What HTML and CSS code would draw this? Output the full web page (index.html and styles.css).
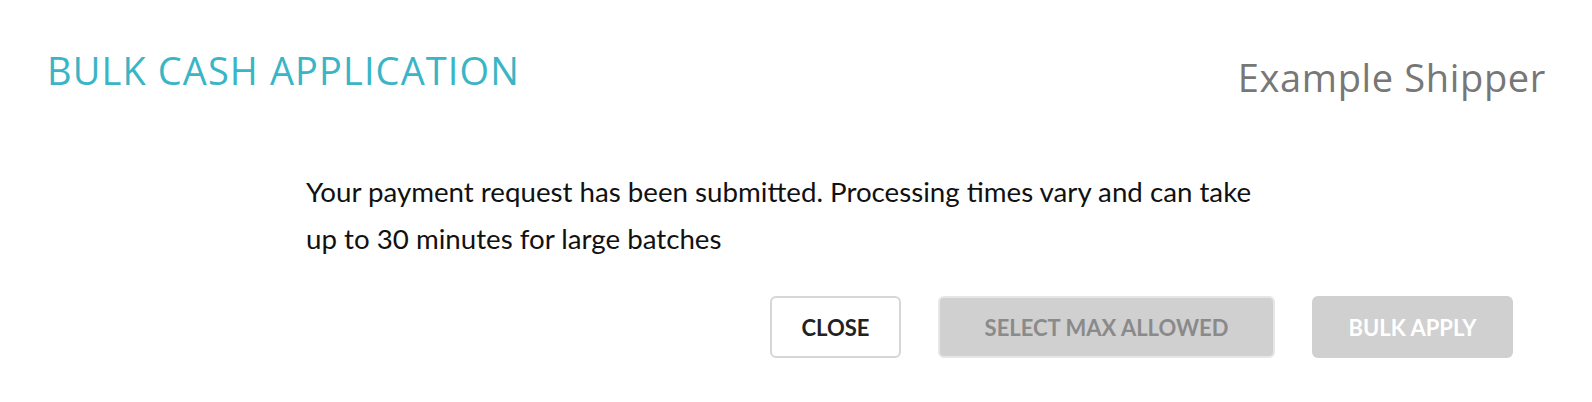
FILE: index.html
```html
<!DOCTYPE html>
<html>
<head>
<meta charset="utf-8">
<link rel="stylesheet" href="styles.css">
</head>
<body>
<div class="modal">
  <div class="header">
    <h1 class="title">BULK CASH APPLICATION</h1>
    <div class="shipper">Example Shipper</div>
  </div>
  <div class="content">
    <p class="message">Your payment request has been submitted. Processing times vary and can take up to 30 minutes for large batches</p>
    <div class="actions">
      <button class="btn btn-close">CLOSE</button>
      <button class="btn btn-select" disabled>SELECT MAX ALLOWED</button>
      <button class="btn btn-apply" disabled>BULK APPLY</button>
    </div>
  </div>
</div>
</body>
</html>
```
FILE: styles.css
```css
html, body {
  margin: 0;
  padding: 0;
  background: #ffffff;
}
body {
  font-family: Lato, "Liberation Sans", sans-serif;
  color: #111;
}
.modal {
  width: 1592px;
  height: 402px;
  box-sizing: border-box;
  padding: 48px 46px 0 47px;
}
.header {
  display: flex;
  justify-content: space-between;
  align-items: flex-start;
}
.title {
  margin: 0;
  font-family: "Open Sans", sans-serif;
  font-weight: 400;
  font-size: 38px;
  line-height: 44px;
  color: #3ab5c6;
  letter-spacing: 1.1px;
}
.shipper {
  margin-top: 7px;
  font-family: "Open Sans", sans-serif;
  font-size: 38px;
  line-height: 44px;
  color: #777777;
  letter-spacing: 0.65px;
}
.content {
  margin: 69px 33px 0 259px;
}
.message {
  margin: 0;
  max-width: 962px;
  font-size: 27.7px;
  line-height: 47px;
  color: #111;
}
.actions {
  display: flex;
  justify-content: flex-end;
  gap: 37px;
  margin-top: 34px;
}
.btn {
  height: 62px;
  box-sizing: border-box;
  border-radius: 6px;
  font-family: Lato, sans-serif;
  font-weight: 700;
  font-size: 22px;
  padding: 0;
  text-transform: uppercase;
}
.btn-close {
  width: 131px;
  background: #fff;
  border: 2px solid #d6d6d6;
  color: #222;
}
.btn-select {
  width: 337px;
  background: #d0d0d0;
  border: 2px solid #e6e6e6;
  color: #8a8a8a;
}
.btn-apply {
  width: 201px;
  background: #d0d0d0;
  border: none;
  color: #ffffff;
}
```
